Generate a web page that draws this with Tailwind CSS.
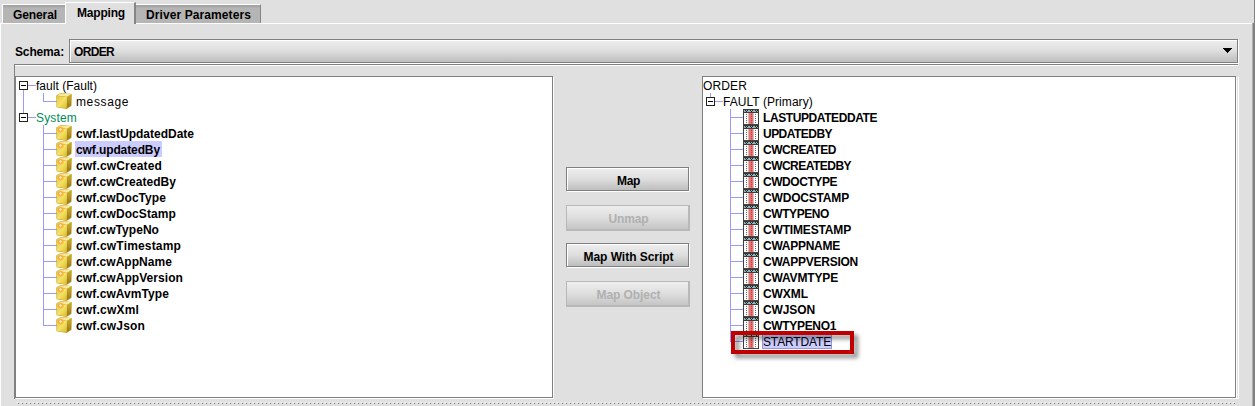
<!DOCTYPE html>
<html lang="en"><head><meta charset="utf-8"><title>Mapping</title>
<script src="https://cdn.jsdelivr.net/npm/@tailwindcss/browser@4"></script></head>
<body class="w-[1255px] h-[406px] overflow-hidden bg-[#e0e0e0] font-['Liberation_Sans',Arial,sans-serif] text-[12px] leading-4 text-black">
<svg class="absolute h-0 w-0">
<defs>
<linearGradient id="gold" x1="0" x2="1" y1="0" y2="1"><stop offset="0" stop-color="#e6c93c"/><stop offset=".5" stop-color="#f5e165"/><stop offset="1" stop-color="#d8b92c"/></linearGradient>
<linearGradient id="side" x1="0" x2="0" y1="0" y2="1"><stop offset="0" stop-color="#cfac28"/><stop offset="1" stop-color="#947818"/></linearGradient></defs>
<symbol id="cube" viewBox="0 0 16 16"><path d="M0.3 2.4 4.6 0 15.7 .9 15.5 12.7 10.8 16 .5 14.2Z" fill="#c0a02c"/><path d="M.8 2.6 4.8.5 15.2 1.3 11 3.7Z" fill="#f8eb98"/><path d="M.8 3 11 4.1 10.6 15.4 1 13.7Z" fill="url(#gold)"/><path d="M11.2 4.2 15.3 1.8 15 12.4 11 15.1Z" fill="url(#side)"/></symbol>
<symbol id="spark" viewBox="0 0 16 16"><circle cx="4.5" cy="4.5" r="3.2" fill="#ffbe3c" opacity=".7"/><circle cx="4.5" cy="4.5" r="1.8" fill="#fff3c0" stroke="#ff9a35"/></symbol>
<symbol id="column" viewBox="0 0 16 16"><g shape-rendering="crispEdges"><path fill="#3c3c3c" d="M0 0h16v16H0z"/><path fill="#94b8b4" d="M1 1h14v2H1z"/><path d="M2 1h1v1H2zM4 1h1v1H4zM7 1h1v1H7zM9 1h1v1H9zM12 1h1v1h-1zM14 1h1v1h-1zM3 2h1v1H3zM8 2h1v1H8zM13 2h1v1h-1z" fill="#222"/><path fill="#fff" d="M1 4h14v12H1z"/><path fill="#f86c6c" d="M6 4h4v12H6z"/><path fill="#c4c4c4" d="M5 4h1v12H5zM10 4h1v12h-1z"/><path fill="#666" d="M3 5h1v1H3zM3 7h1v1H3zM3 9h1v1H3zM3 11h1v1H3zM3 13h1v1H3zM12 5h1v1h-1zM12 7h1v1h-1zM12 9h1v1h-1zM12 11h1v1h-1zM12 13h1v1h-1z"/><path fill="#a04848" d="M8 5h1v1H8zM8 7h1v1H8zM8 9h1v1H8zM8 11h1v1H8zM8 13h1v1H8z"/><path fill="#444" d="M0 15h16v1H0z"/></g></symbol>
</svg>
<div class="relative flex h-[406px] flex-col">
 <nav class="flex h-[23px] items-end pl-[2px] font-bold">
  <div class="flex h-[19px] w-[63px] items-center border-l border-t border-white bg-linear-to-b from-[#a0a0a0] to-[#b5b5b5] to-20% pl-[10px] pt-px"><span data-w="44">General</span></div>
  <div class="relative -mb-px flex h-[22px] w-[71px] items-start border-l border-t border-r-2 border-l-white border-t-white border-r-[#858585] bg-[#e0e0e0] pl-[11px] pt-[2px]"><span data-w="48">Mapping</span></div>
  <div class="flex h-[19px] w-[125px] items-center border-t border-r border-t-white border-r-[#858585] bg-linear-to-b from-[#a0a0a0] to-[#b5b5b5] to-20% pl-[10px] pt-px"><span data-w="105">Driver Parameters</span></div>
 </nav>
 <main class="h-[383px] border-t border-l border-white pl-[13px] pt-[15px]">
  <div class="flex h-[25px] w-[1224px]">
   <label class="w-[55px] pt-[5px] pl-px font-bold"><span data-w="49">Schema:</span></label>
   <div class="flex h-[24px] grow items-center justify-between border border-[#808080] bg-linear-to-b from-[#eeeeee] via-[#dedede] to-[#bdbdbd] pl-1 pr-[5px] pt-px font-bold shadow-[1px_1px_0_white,inset_1px_1px_0_white]"><span data-w="40">ORDER</span><svg class="mb-[3px] h-[5px] w-[10px]" viewBox="0 0 10 5" shape-rendering="crispEdges"><path d="M0 0h10L5 5Z"/></svg></div>
  </div>
  <section class="flex h-[335px] w-[1224px] border-t border-l border-[#808080] pt-[11px] shadow-[inset_0_1px_0_white]">
   <div class="relative h-[322px] w-[538px] border border-[#808080] bg-white shadow-[1px_1px_0_white]" id="left">
    <svg class="absolute left-0 top-0 h-[260px] w-[60px]" shape-rendering="crispEdges"><path d="M7.5 12v25M11 8.5h9M11 40.5h9M27.5 16v8.5M27.5 24.5h13M27.5 48v201M27.5 56.5h13m-13 16h13m-13 16h13m-13 16h13m-13 16h13m-13 16h13m-13 16h13m-13 16h13m-13 16h13m-13 16h13m-13 16h13m-13 16h13m-13 16h13" stroke="#9999ff" fill="none"/><path d="M3.5 4.5h8v8h-8zM3.5 36.5h8v8h-8z" fill="white" stroke="#222"/><path d="M5 8.5h5M5 40.5h5" stroke="#000"/></svg>
   </div>
   <div class="flex w-[149px] flex-col items-center gap-[12px] pt-[91px] pl-px font-bold">
    <button class="mb-[2px] mr-px h-[24px] w-[123px] border border-[#808080] bg-linear-to-b from-[#eeeeee] via-[#dedede] to-[#bdbdbd] pl-[2px] pt-[3px] shadow-[1px_1px_0_white,inset_1px_1px_0_white]"><span data-w="23">Map</span></button>
    <button class="h-[26px] w-[124px] border border-r-2 border-b-2 border-[#b8b8b8] bg-linear-to-b from-[#eeeeee] via-[#dedede] to-[#c5c5c5] pl-[2px] pt-[2px] text-[#b0b0b0]"><span data-w="40">Unmap</span></button>
    <button class="mb-[2px] mr-px h-[24px] w-[123px] border border-[#808080] bg-linear-to-b from-[#eeeeee] via-[#dedede] to-[#bdbdbd] pl-[2px] pt-[3px] shadow-[1px_1px_0_white,inset_1px_1px_0_white]"><span data-w="90">Map With Script</span></button>
    <button class="h-[26px] w-[124px] border border-r-2 border-b-2 border-[#b8b8b8] bg-linear-to-b from-[#eeeeee] via-[#dedede] to-[#c5c5c5] pl-[2px] pt-[2px] text-[#b0b0b0]"><span data-w="64">Map Object</span></button>
   </div>
   <div class="relative h-[322px] w-[534px] border border-[#808080] bg-white shadow-[1px_1px_0_white,2px_0_0_#e0e0e0,3px_1px_0_white]" id="right">
    <svg class="absolute left-0 top-0 h-[270px] w-[60px]" shape-rendering="crispEdges"><path d="M7.5 16v5M11 24.5h9M27.5 32v233M27.5 40.5h13m-13 16h13m-13 16h13m-13 16h13m-13 16h13m-13 16h13m-13 16h13m-13 16h13m-13 16h13m-13 16h13m-13 16h13m-13 16h13m-13 16h13m-13 16h13m-13 16h13" stroke="#9999ff" fill="none"/><path d="M3.5 20.5h8v8h-8z" fill="white" stroke="#222"/><path d="M5 24.5h5"  stroke="#000"/></svg>
    <div class="absolute left-[28px] top-[254px] z-10 h-[23px] w-[123px] border-4 border-[#c00000] [filter:drop-shadow(4px_4px_2px_rgb(0_0_0/0.45))]"></div>
   </div>
  </section>
 </main>
 <div class="absolute bottom-0 right-0 top-[23px] w-[3px] border-l border-[#b0b0b0] bg-[#808080]"></div>
 <div class="absolute right-0 top-0 h-[23px] w-px bg-[#808080]"></div>
 <svg class="absolute left-[17px] top-[401px] h-[4px] w-[1219px]" shape-rendering="crispEdges"><defs><pattern id="dots" width="4" height="4" patternUnits="userSpaceOnUse"><path d="M0 1h1v1H0z" fill="#fff"/><path d="M1 2h1v1H1z" fill="#777"/></pattern></defs><path d="M0 0h1219v4H0z" fill="url(#dots)"/></svg>
</div>
<script>
const left=[['fault (Fault)',61,'root'],['message',53,'plain'],['System',41,'green'],['cwf.lastUpdatedDate',118],['cwf.updatedBy',84,'selected'],['cwf.cwCreated',86],['cwf.cwCreatedBy',100],['cwf.cwDocType',90],['cwf.cwDocStamp',100],['cwf.cwTypeNo',83],['cwf.cwTimestamp',105],['cwf.cwAppName',96],['cwf.cwAppVersion',107],['cwf.cwAvmType',93],['cwf.cwXml',63],['cwf.cwJson',69]];
const right=[['ORDER',44,'top'],['FAULT (Primary)',90,'root'],['LASTUPDATEDDATE',114],['UPDATEDBY',69],['CWCREATED',73],['CWCREATEDBY',88],['CWDOCTYPE',74],['CWDOCSTAMP',86],['CWTYPENO',66],['CWTIMESTAMP',88],['CWAPPNAME',77],['CWAPPVERSION',95],['CWAVMTYPE',75],['CWXML',45],['CWJSON',52],['CWTYPENO1',73],['STARTDATE',68,'current']];
const label={root:'pt-px',top:'pt-px',green:'pt-px text-[#008c5a]',plain:'pt-px',selected:'pt-px bg-[#ccccff] font-bold shadow-[-1px_0_0_#ccccff,2px_0_0_#ccccff]',current:'pt-px bg-[#ccccff] shadow-[-1px_0_0_#9999cc,1px_0_0_#9999cc,inset_0_1px_0_#9999cc,inset_0_-1px_0_#9999cc]'};
function fill(id,rows){const box=document.getElementById(id);
for(const [text,w,kind] of rows){const row=document.createElement('div');
 const root=kind==='root'||kind==='green';
 row.className=kind==='top'?'flex h-4':root?'relative flex h-4 pl-[20px]':'relative flex h-4 pl-[40px]';
 let icon='';
 if(!root&&kind!=='top'){icon=id==='left'?'<svg class="mr-1 h-4 w-4 shrink-0"><use href="#cube"/>'+(kind==='plain'?'':'<use href="#spark"/>')+'</svg>':'<svg class="mr-1 h-4 w-4 shrink-0"><use href="#column"/></svg>'}
 row.innerHTML=icon+'<span data-w="'+w+'" class="'+(kind?label[kind]:'pt-px font-bold')+'"></span>';
 row.lastChild.textContent=text;box.append(row)}}
fill('left',left);fill('right',right);
// Fit each label to its width in the toolkit's font metrics.
const pen=document.createElement('canvas').getContext('2d');
document.querySelectorAll('[data-w]').forEach(e=>{e.style.whiteSpace='nowrap';
 const bold=e.closest('.font-bold');
 pen.font=(bold?'bold ':'')+'12px "Liberation Sans"';
 e.style.letterSpacing=((+e.dataset.w-pen.measureText(e.textContent).width)/e.textContent.length)+'px'});
</script></body></html>
